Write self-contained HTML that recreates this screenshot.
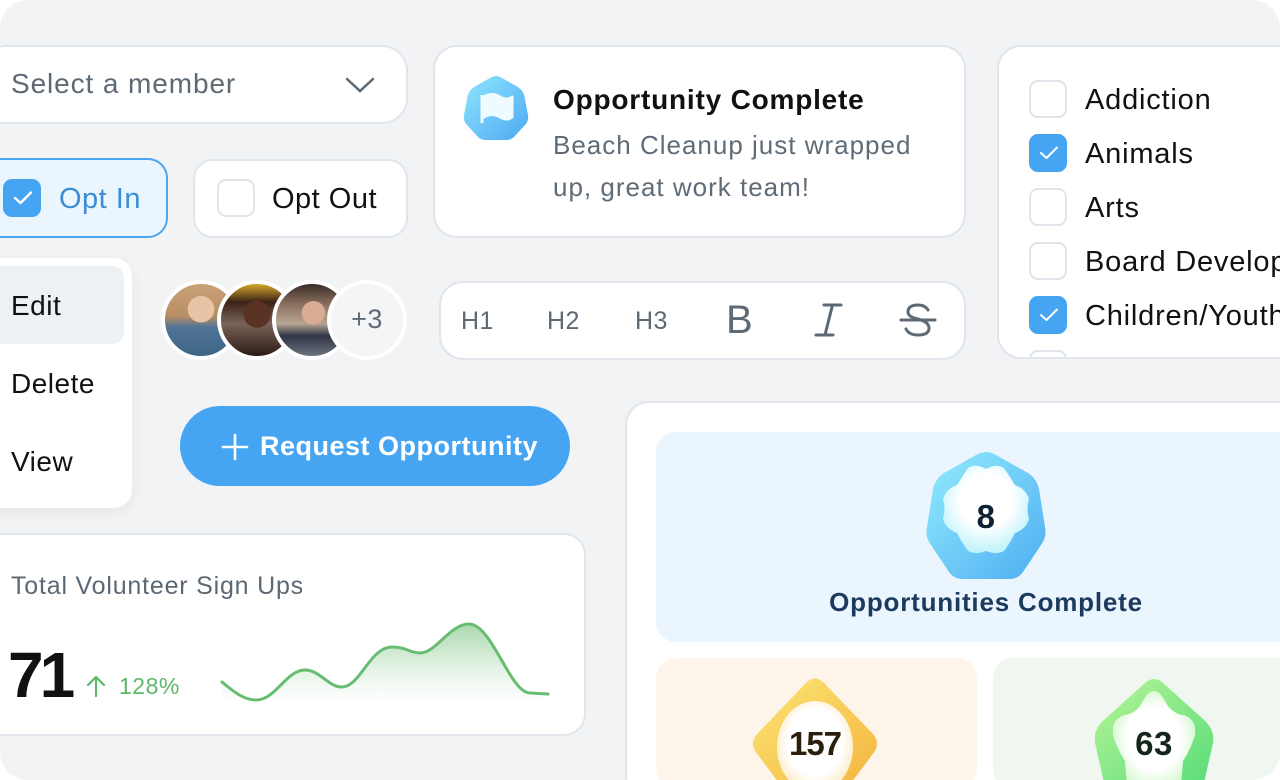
<!DOCTYPE html>
<html><head><meta charset="utf-8"><style>
*{box-sizing:border-box;margin:0;padding:0}
html,body{width:1280px;height:780px;background:#fff;overflow:hidden;font-family:"Liberation Sans",sans-serif}
#wrap{position:absolute;left:0;top:0;width:1280px;height:780px;background:#f1f3f5;border-radius:28px;overflow:hidden}
.abs{position:absolute}
.card{position:absolute;background:#fff;border:2px solid #e1e6ec}
.cb{position:absolute;width:38px;height:38px;border:2px solid #dfe5eb;border-radius:9px;background:#fff}
.cb.on{background:#45a5f3;border-color:#45a5f3}
.cb.on svg{position:absolute;left:8px;top:9px}
.t{position:absolute;white-space:nowrap;letter-spacing:0.5px}
</style></head><body><div id="wrap">

<!-- select -->
<div class="card" style="left:-20px;top:45px;width:428px;height:79px;border-radius:26px"></div>
<div class="t" style="left:11px;top:68px;font-size:28px;color:#5d6a76;letter-spacing:0.9px">Select a member</div>
<svg class="abs" style="left:345px;top:75px" width="30" height="20" viewBox="0 0 30 20"><path d="M2 4 L15 16 L28 4" fill="none" stroke="#5d6a76" stroke-width="2.5" stroke-linecap="round"/></svg>

<!-- opt in -->
<div class="abs" style="left:-20px;top:158px;width:188px;height:80px;border-radius:20px;background:#eaf5fe;border:2px solid #4aa6f0"></div>
<div class="cb on" style="left:3px;top:179px"><svg width="20" height="16" viewBox="0 0 20 16"><path d="M2 8 L7.5 13 L18 2.5" fill="none" stroke="#fff" stroke-width="2.4" stroke-linecap="round" stroke-linejoin="round"/></svg></div>
<div class="t" style="left:59px;top:183px;font-size:29px;color:#3a8fd8">Opt In</div>

<!-- opt out -->
<div class="card" style="left:193px;top:159px;width:215px;height:79px;border-radius:20px"></div>
<div class="cb" style="left:217px;top:179px"></div>
<div class="t" style="left:272px;top:183px;font-size:29px;color:#111">Opt Out</div>

<!-- notification -->
<div class="card" style="left:433px;top:45px;width:533px;height:193px;border-radius:24px"></div>
<svg class="abs" style="left:462px;top:75px" width="68" height="66" viewBox="0 0 68 66"><defs><linearGradient id="g1" x1="0" y1="0" x2="1" y2="1"><stop offset="0" stop-color="#8fe6fc"/><stop offset="1" stop-color="#4ea9f3"/></linearGradient></defs><path d="M28 3 Q34 -1 40 3 L56 12 Q62 16 63 24 L66 40 Q67 46 63 50 L52 62 Q49 65 44 65 L24 65 Q19 65 16 62 L5 50 Q1 46 2 40 L5 24 Q6 16 12 12 Z" fill="url(#g1)"/><path d="M20 20 L20 48 M22 22 Q30 17 38 22 Q45 26 50 22 L50 42 Q45 46 38 42 Q30 37 22 42 Z" fill="#eefbff" stroke="#eefbff" stroke-width="3" stroke-linejoin="round"/></svg>
<div class="t" style="left:553px;top:84px;font-size:28px;font-weight:bold;color:#111;letter-spacing:0.8px">Opportunity Complete</div>
<div class="t" style="left:553px;top:124px;font-size:26px;color:#5f6c78;line-height:42px;letter-spacing:1px">Beach Cleanup just wrapped<br>up, great work team!</div>

<!-- checkbox list -->
<div class="card" style="left:997px;top:45px;width:320px;height:314px;border-radius:24px;overflow:hidden"></div>
<div class="abs" style="left:999px;top:47px;width:281px;height:310px;overflow:hidden">
 <div class="cb" style="left:30px;top:33px"></div>
 <div class="cb on" style="left:30px;top:87px"><svg width="20" height="16" viewBox="0 0 20 16"><path d="M2 8 L7.5 13 L18 2.5" fill="none" stroke="#fff" stroke-width="2" stroke-linecap="round" stroke-linejoin="round"/></svg></div>
 <div class="cb" style="left:30px;top:141px"></div>
 <div class="cb" style="left:30px;top:195px"></div>
 <div class="cb on" style="left:30px;top:249px"><svg width="20" height="16" viewBox="0 0 20 16"><path d="M2 8 L7.5 13 L18 2.5" fill="none" stroke="#fff" stroke-width="2" stroke-linecap="round" stroke-linejoin="round"/></svg></div>
 <div class="cb" style="left:30px;top:303px"></div>
 <div class="t" style="left:86px;top:36px;font-size:29px;color:#111;line-height:34px;letter-spacing:0.8px">Addiction</div>
 <div class="t" style="left:86px;top:90px;font-size:29px;color:#111;line-height:34px;letter-spacing:0.8px">Animals</div>
 <div class="t" style="left:86px;top:144px;font-size:29px;color:#111;line-height:34px;letter-spacing:0.8px">Arts</div>
 <div class="t" style="left:86px;top:198px;font-size:29px;color:#111;line-height:34px;letter-spacing:0.8px">Board Development</div>
 <div class="t" style="left:86px;top:252px;font-size:29px;color:#111;line-height:34px;letter-spacing:0.8px">Children/Youth</div>
</div>

<!-- menu -->
<div class="abs" style="left:-20px;top:258px;width:152px;height:250px;background:#fff;border-radius:18px;box-shadow:0 4px 14px rgba(0,0,0,0.06)"></div>
<div class="abs" style="left:-10px;top:266px;width:134px;height:78px;background:#edf1f5;border-radius:12px"></div>
<div class="t" style="left:11px;top:290px;font-size:28px;color:#111">Edit</div>
<div class="t" style="left:11px;top:368px;font-size:28px;color:#111">Delete</div>
<div class="t" style="left:11px;top:446px;font-size:28px;color:#111">View</div>

<!-- avatars -->
<div class="abs" style="left:161px;top:280px;width:80px;height:80px;border-radius:50%;border:4px solid #fff;background:radial-gradient(circle at 50% 35%,#e8c3a5 0 22%,transparent 23%),linear-gradient(180deg,#c9a27a 0%,#b88d63 45%,#4f7496 60%,#3f6586 100%)"></div>
<div class="abs" style="left:217px;top:280px;width:80px;height:80px;border-radius:50%;border:4px solid #fff;background:radial-gradient(circle at 50% 42%,#5a3324 0 24%,transparent 25%),linear-gradient(180deg,#d6a72a 0%,#3b2318 25%,#7a6358 55%,#2a1a14 100%)"></div>
<div class="abs" style="left:272px;top:280px;width:80px;height:80px;border-radius:50%;border:4px solid #fff;background:radial-gradient(circle at 52% 40%,#d9ad94 0 20%,transparent 21%),linear-gradient(180deg,#3a2e28 0%,#8e7462 30%,#b9a594 55%,#2f3542 72%,#6c7280 100%)"></div>
<div class="abs" style="left:327px;top:280px;width:80px;height:80px;border-radius:50%;border:4px solid #fff;background:#f3f5f7"></div>
<div class="t" style="left:327px;top:304px;width:80px;text-align:center;font-size:27px;color:#5d6a76">+3</div>

<!-- toolbar -->
<div class="card" style="left:439px;top:281px;width:527px;height:79px;border-radius:24px"></div>
<div class="t" style="left:461px;top:307px;font-size:25px;color:#5d6a76">H1</div>
<div class="t" style="left:547px;top:307px;font-size:25px;color:#5d6a76">H2</div>
<div class="t" style="left:635px;top:307px;font-size:25px;color:#5d6a76">H3</div>
<div class="t" style="left:726px;top:298px;font-size:40px;color:#5d6a76">B</div>
<svg class="abs" style="left:814px;top:302px" width="30" height="36" viewBox="0 0 30 36"><path d="M10 3 H27 M18.5 3 L11 33 M2 33 H19" fill="none" stroke="#5d6a76" stroke-width="3" stroke-linecap="round"/></svg>
<svg class="abs" style="left:899px;top:302px" width="38" height="36" viewBox="0 0 38 36"><path d="M29 8 Q26 3 19 3 Q9 3 9 10 Q9 15 19 17 Q30 20 30 26 Q30 33 19 33 Q10 33 7 27 M2 18 H36" fill="none" stroke="#5d6a76" stroke-width="3" stroke-linecap="round"/></svg>

<!-- button -->
<div class="abs" style="left:180px;top:406px;width:390px;height:80px;border-radius:40px;background:#45a5f3"></div>
<svg class="abs" style="left:221px;top:433px" width="28" height="28" viewBox="0 0 28 28"><path d="M14 2 V26 M2 14 H26" stroke="#fff" stroke-width="2.6" stroke-linecap="round"/></svg>
<div class="t" style="left:260px;top:431px;font-size:27px;font-weight:bold;color:#fff">Request Opportunity</div>

<!-- stats card -->
<div class="card" style="left:-20px;top:533px;width:606px;height:203px;border-radius:22px"></div>
<div class="t" style="left:11px;top:572px;font-size:25px;color:#5b6874;letter-spacing:0.8px">Total Volunteer Sign Ups</div>
<div class="t" style="left:8px;top:638px;font-size:64px;font-weight:bold;color:#111;letter-spacing:-4px">71</div>
<svg class="abs" style="left:84px;top:674px" width="24" height="24" viewBox="0 0 24 24"><path d="M12 22 V3 M4 11 L12 3 L20 11" fill="none" stroke="#5cb96a" stroke-width="2.2" stroke-linecap="round" stroke-linejoin="round"/></svg>
<div class="t" style="left:119px;top:673px;font-size:23px;color:#5cb96a">128%</div>
<svg class="abs" style="left:220px;top:618px" width="332" height="90" viewBox="0 0 332 90"><defs><linearGradient id="gg" x1="0" y1="0" x2="0" y2="1"><stop offset="0" stop-color="#a9d8ad"/><stop offset="1" stop-color="#fff" stop-opacity="0.6"/></linearGradient></defs>
<path d="M2 64 C14 74 24 82 36 82 C56 82 66 52 85 52 C100 52 108 69 122 69 C140 69 150 29 172 29 C186 29 190 35 200 35 C216 35 230 6 249 6 C272 6 290 75 310 75 L328 77 L328 84 L2 84 Z" fill="url(#gg)"/>
<path d="M2 64 C14 74 24 82 36 82 C56 82 66 52 85 52 C100 52 108 69 122 69 C140 69 150 29 172 29 C186 29 190 35 200 35 C216 35 230 6 249 6 C272 6 290 75 310 75 L328 76" fill="none" stroke="#66bd6f" stroke-width="3" stroke-linecap="round"/></svg>

<!-- big card -->
<div class="card" style="left:625px;top:401px;width:700px;height:400px;border-radius:24px"></div>
<div class="abs" style="left:656px;top:432px;width:660px;height:210px;border-radius:20px;background:#eaf5fe"></div>
<svg class="abs" style="left:920px;top:451px" width="132" height="130" viewBox="0 0 132 130"><defs><linearGradient id="hb" x1="0" y1="0" x2="1" y2="1"><stop offset="0" stop-color="#92ecfd"/><stop offset="1" stop-color="#4fadf2"/></linearGradient><radialGradient id="hi" cx="0.5" cy="0.4" r="0.6"><stop offset="0.5" stop-color="#fff"/><stop offset="1" stop-color="#bff3fb"/></radialGradient></defs><path d="M56 4 Q66 -2 76 4 L108 22 Q117 28 119 38 L125 76 Q127 86 121 94 L103 121 Q98 128 89 128 L43 128 Q34 128 29 121 L11 94 Q5 86 7 76 L13 38 Q15 28 24 22 Z" fill="url(#hb)"/><path d="M66 18 Q76 12 84 17 Q90 26 95 34 Q106 38 109 48 Q106 58 109 68 Q106 78 95 82 Q90 92 84 100 Q76 104 66 100 Q56 104 48 100 Q42 92 37 82 Q26 78 23 68 Q26 58 23 48 Q26 38 37 34 Q42 26 48 17 Q56 12 66 18 Z" fill="url(#hi)"/></svg>
<div class="t" style="left:920px;top:498px;width:132px;text-align:center;font-size:33px;font-weight:bold;color:#0f2235">8</div>
<div class="t" style="left:499px;top:587px;width:974px;text-align:center;font-size:26px;font-weight:bold;color:#1b3a5c;letter-spacing:0.8px">Opportunities Complete</div>

<div class="abs" style="left:656px;top:658px;width:321px;height:130px;border-radius:20px;background:#fdf5e9"></div>
<svg class="abs" style="left:748px;top:677px" width="134" height="103" viewBox="0 0 134 103"><defs><linearGradient id="ob" x1="0" y1="0" x2="1" y2="1"><stop offset="0" stop-color="#fbe674"/><stop offset="1" stop-color="#f5b43f"/></linearGradient><radialGradient id="oi" cx="0.5" cy="0.45" r="0.6"><stop offset="0.6" stop-color="#fff"/><stop offset="1" stop-color="#fde6b6"/></radialGradient></defs><path d="M58 6 Q67 -3 76 6 L124 56 Q134 66 124 78 L100 110 L34 110 L10 78 Q0 66 10 56 Z" fill="url(#ob)"/><ellipse cx="67" cy="70" rx="38" ry="46" fill="url(#oi)"/></svg>
<div class="t" style="left:748px;top:725px;width:134px;text-align:center;font-size:33px;font-weight:bold;color:#2b1e0c;letter-spacing:-1px">157</div>

<div class="abs" style="left:993px;top:658px;width:330px;height:130px;border-radius:20px;background:#eff7f0"></div>
<svg class="abs" style="left:1087px;top:677px" width="134" height="103" viewBox="0 0 134 103"><defs><linearGradient id="gb" x1="0" y1="0" x2="1" y2="1"><stop offset="0" stop-color="#b8f598"/><stop offset="1" stop-color="#58dc78"/></linearGradient><radialGradient id="gi" cx="0.5" cy="0.5" r="0.6"><stop offset="0.55" stop-color="#fff"/><stop offset="1" stop-color="#c8f5c0"/></radialGradient></defs><path d="M58 6 Q67 -2 76 6 L116 42 Q128 52 126 66 L116 110 L18 110 L8 66 Q6 52 18 42 Z" fill="url(#gb)"/><path d="M56 24 Q67 4 78 24 Q84 36 96 38 Q110 42 108 58 Q104 72 96 84 L94 110 L40 110 L38 84 Q30 72 26 58 Q24 42 38 38 Q50 36 56 24 Z" fill="url(#gi)"/></svg>
<div class="t" style="left:1087px;top:725px;width:134px;text-align:center;font-size:33px;font-weight:bold;color:#14261a">63</div>

</div></body></html>
